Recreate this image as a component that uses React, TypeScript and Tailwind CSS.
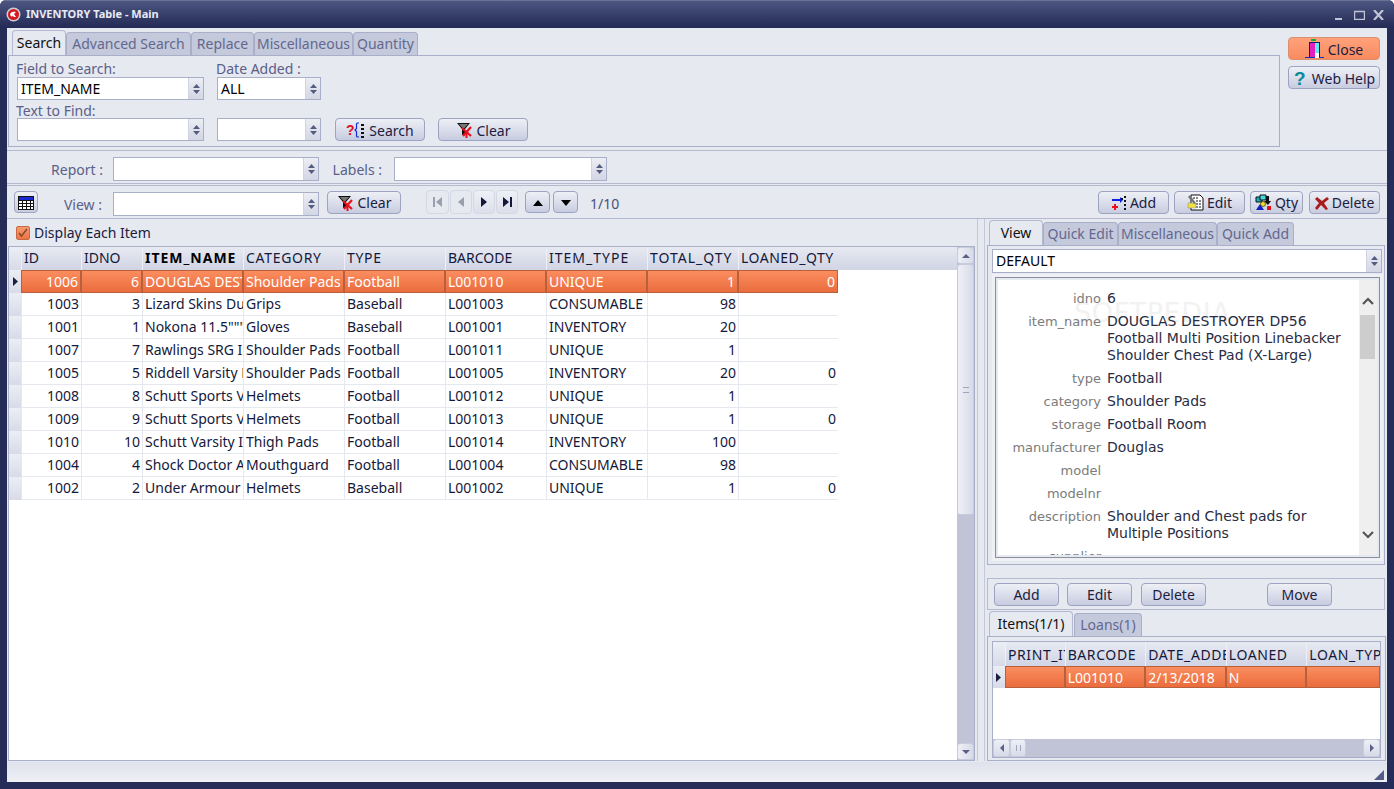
import type { ReactNode } from "react"

const columns = [
  { name: "ID", w: "w-[60px]", t: "", right: true },
  { name: "IDNO", w: "w-[61px]", t: "", right: true },
  { name: "ITEM_NAME", w: "w-[101px]", t: "tracking-[1px]", bold: true },
  { name: "CATEGORY", w: "w-[101px]", t: "tracking-[0.7px]" },
  { name: "TYPE", w: "w-[101px]", t: "tracking-[0.7px]" },
  { name: "BARCODE", w: "w-[101px]", t: "" },
  { name: "ITEM_TYPE", w: "w-[101px]", t: "tracking-[1px]" },
  { name: "TOTAL_QTY", w: "w-[91px]", t: "tracking-[1px]", right: true },
  { name: "LOANED_QTY", w: "w-[100px]", t: "tracking-[0.5px]", right: true },
]

const rows = [
  ["1006", "6", "DOUGLAS DESTROYER", "Shoulder Pads", "Football", "L001010", "UNIQUE", "1", "0"],
  ["1003", "3", "Lizard Skins Dura", "Grips", "Baseball", "L001003", "CONSUMABLE", "98", ""],
  ["1001", "1", 'Nokona 11.5"""', "Gloves", "Baseball", "L001001", "INVENTORY", "20", ""],
  ["1007", "7", "Rawlings SRG Int", "Shoulder Pads", "Football", "L001011", "UNIQUE", "1", ""],
  ["1005", "5", "Riddell Varsity Pad", "Shoulder Pads", "Football", "L001005", "INVENTORY", "20", "0"],
  ["1008", "8", "Schutt Sports Vari", "Helmets", "Football", "L001012", "UNIQUE", "1", ""],
  ["1009", "9", "Schutt Sports Vari", "Helmets", "Football", "L001013", "UNIQUE", "1", "0"],
  ["1010", "10", "Schutt Varsity Ice", "Thigh Pads", "Football", "L001014", "INVENTORY", "100", ""],
  ["1004", "4", "Shock Doctor Adult", "Mouthguard", "Football", "L001004", "CONSUMABLE", "98", ""],
  ["1002", "2", "Under Armour Pro", "Helmets", "Baseball", "L001002", "UNIQUE", "1", "0"],
]

const subColumns = [
  { name: "PRINT_ITEM", value: "", w: "w-[60px]" },
  { name: "BARCODE", value: "L001010", w: "w-[81px]" },
  { name: "DATE_ADDED", value: "2/13/2018", w: "w-[81px]" },
  { name: "LOANED", value: "N", w: "w-[81px]" },
  { name: "LOAN_TYPE", value: "", w: "w-[74px]" },
]

const details: [string, string[]][] = [
  ["idno", ["6"]],
  ["item_name", ["DOUGLAS DESTROYER DP56", "Football Multi Position Linebacker", "Shoulder Chest Pad (X-Large)"]],
  ["type", ["Football"]],
  ["category", ["Shoulder Pads"]],
  ["storage", ["Football Room"]],
  ["manufacturer", ["Douglas"]],
  ["model", [""]],
  ["modelnr", [""]],
  ["description", ["Shoulder and Chest pads for", "Multiple Positions"]],
  ["supplier", [""]],
]

function Combo({ className, value }: { className: string; value?: string }) {
  return (
    <div className={`flex bg-white border border-[#a9afc9] ${className}`}>
      <div className="flex-1 pl-[3px] leading-[21px] text-black overflow-hidden whitespace-nowrap">{value}</div>
      <div className="w-[15px] bg-gradient-to-b from-[#eceef4] to-[#d3d6e4] border-l border-[#d0d3e2] flex flex-col items-center justify-center gap-[2px]">
        <svg width="7" height="4" viewBox="0 0 7 4"><path d="M3.5 0 7 4H0z" fill="#555c82" /></svg>
        <svg width="7" height="4" viewBox="0 0 7 4"><path d="M0 0h7L3.5 4z" fill="#555c82" /></svg>
      </div>
    </div>
  )
}

function Btn({ className, children }: { className: string; children: ReactNode }) {
  return (
    <button className={`flex items-center justify-center gap-[3px] pt-px border border-[#9da3c0] rounded-[4px] bg-gradient-to-b from-[#eef0f6] to-[#c8cce0] text-[#1c2040] ${className}`}>
      {children}
    </button>
  )
}

function Tab({ className, active, children }: { className: string; active?: boolean; children: ReactNode }) {
  return (
    <div
      className={
        active
          ? `flex items-center justify-center pb-[2px] border border-b-0 border-[#b4b9d0] rounded-t-[4px] bg-[#e6e9f0] text-[#1c2040] ${className}`
          : `flex items-center justify-center pb-[2px] border border-b-0 border-[#a9afc9] rounded-t-[4px] bg-[#c5c9dc] text-[#62688e] ${className}`
      }
    >
      {children}
    </div>
  )
}

function FilterClearIcon() {
  return (
    <svg width="18" height="18" viewBox="0 0 18 18">
      <path d="M1 2h13L9 8v5l-3 1V8z" fill="#111" />
      <path d="M3 3h9L8.5 7h-2z" fill="#777" />
      <path d="M6 7l9 8M15 6l-8 9" stroke="#e8101c" strokeWidth="2.2" />
      <path d="M9.5 12h2v5h-2z" fill="#e8101c" />
    </svg>
  )
}

function SearchIcon() {
  return (
    <svg width="20" height="17" viewBox="0 0 20 17">
      <text x="0" y="13" fontSize="14" fontWeight="700" fontFamily="Liberation Sans, sans-serif" fill="#e0101c">?</text>
      <path d="M13 1h-1.500q-1 0-1 1v4.500L9 8l1.500 1.500V14q0 1 1 1H13" fill="none" stroke="#1030e0" strokeWidth="1.200" />
      <path d="M15 2h3v2h-3zM15 6h3v2h-3zM15 10h3v2h-3zM15 14h3v2h-3z" fill="#111" />
    </svg>
  )
}

function CloseIcon() {
  return (
    <svg width="19" height="20" viewBox="0 0 19 20">
      <path d="M6 0h5v2H6z" fill="#10b040" />
      <path d="M4 3h11v15H4z" fill="#111a70" />
      <path d="M5 4h5v14H5z" fill="#e020c0" />
      <path d="M10 4h4v14h-4z" fill="#60e8f0" />
      <path d="M0 18h19v1H0z" fill="#1030c0" />
      <path d="M10 14h4v5h-4z" fill="#fff" />
    </svg>
  )
}

function NavBtn({ dim, children, className }: { dim?: boolean; children: ReactNode; className: string }) {
  return (
    <div className={`flex items-center justify-center border border-[#d4d7e4] rounded-[4px] ${dim ? "bg-[#e6e9f0]" : "bg-gradient-to-b from-[#eef0f6] to-[#dcdfea]"} ${className}`}>
      {children}
    </div>
  )
}

function Indicator({ arrow, className }: { arrow?: boolean; className: string }) {
  return (
    <div className={`flex items-center justify-center bg-gradient-to-b from-[#eceef4] to-[#d8dbe8] ${className}`}>
      {arrow && <svg width="5" height="9" viewBox="0 0 5 9"><path d="M0 0l5 4.5L0 9z" fill="#1c2040" /></svg>}
    </div>
  )
}

export default function App() {
  return (
    <div
      className="w-[1394px] h-[789px] overflow-hidden flex flex-col rounded-t-[6px] bg-[#252c57] text-[14px] text-[#1c2040]"
      style={{ fontFamily: '"Noto Sans", sans-serif' }}
    >
      {/* Title bar */}
      <div className="h-[28px] flex items-center pl-[6px] pr-[10px] bg-gradient-to-b from-[#4d5680] to-[#232a55] border-t border-[#6a7296]">
        <svg width="15" height="15" viewBox="0 0 15 15">
          <circle cx="7.5" cy="7.5" r="7" fill="#d0d0d8" />
          <circle cx="7.5" cy="7.5" r="5.5" fill="#d81820" />
          <path d="M4 8c0-3 3-4 6-3L8 7l2 3H8L6.5 8.5 6 10z" fill="#fff" />
        </svg>
        <span className="ml-[5px] text-[11px] font-bold text-[#e8eaf4]">INVENTORY Table - Main</span>
        <div className="ml-auto flex items-center gap-[8px]">
          <svg className="mr-[3px]" width="8" height="10" viewBox="0 0 8 10"><path d="M0 8h7v2H0z" fill="#c0c4d4" /></svg>
          <svg width="11" height="10" viewBox="0 0 11 10"><path d="M.5 1.500h10v8H.5z" fill="none" stroke="#c0c4d4" strokeWidth="1.400" /></svg>
          <svg width="11" height="10" viewBox="0 0 11 10"><path d="M1 0l9 10M10 0l-9 10" stroke="#c0c4d4" strokeWidth="2.200" /></svg>
        </div>
      </div>

      <div className="mx-[7px] h-[754px] flex flex-col bg-[#e6e9f0]">
        {/* Search tabs and close / help */}
        <div className="h-[122px] flex">
          <div className="w-[1273px] flex flex-col">
            <div className="h-[27px] pl-[5px] flex items-end">
              <Tab active className="w-[54px] h-[25px] text-[#111]">Search</Tab>
              <Tab className="w-[125px] h-[23px]">Advanced Search</Tab>
              <Tab className="w-[63px] h-[23px]">Replace</Tab>
              <Tab className="w-[99px] h-[23px]">Miscellaneous</Tab>
              <Tab className="w-[65px] h-[23px]">Quantity</Tab>
            </div>
            <div className="h-[92px] ml-px border border-[#a9afc9] pl-[8px] text-[#5a6088]">
              <div className="flex h-[21px] items-end leading-[16px]">
                <span className="w-[200px] -ml-px">Field to Search:</span>
                <span>Date Added :</span>
              </div>
              <div className="flex gap-[13px]">
                <Combo className="w-[187px] h-[23px]" value="ITEM_NAME" />
                <Combo className="w-[104px] h-[23px]" value="ALL" />
              </div>
              <div className="h-[18px] leading-[22px] -ml-px">Text to Find:</div>
              <div className="flex">
                <Combo className="w-[187px] h-[23px]" />
                <Combo className="w-[104px] h-[23px] ml-[13px]" />
                <Btn className="w-[90px] h-[23px] ml-[14px]"><SearchIcon />Search</Btn>
                <Btn className="w-[90px] h-[23px] ml-[13px]"><FilterClearIcon />Clear</Btn>
              </div>
            </div>
          </div>
          <div className="pt-[9px] pl-[8px] flex flex-col gap-[6px]">
            <Btn className="w-[92px] h-[23px] border-[#d89070] from-[#ffa27c] to-[#f98a5e] gap-[4px]"><CloseIcon />Close</Btn>
            <Btn className="w-[92px] h-[23px]">
              <svg width="16" height="20" viewBox="0 0 16 20">
                <text x="1" y="17" fontSize="19" fontWeight="700" fontFamily="Liberation Sans, sans-serif" fill="#0a8a9a">?</text>
              </svg>
              Web Help
            </Btn>
          </div>
        </div>

        {/* Report row */}
        <div className="h-[34px] pt-[3px] border-y border-[#b4b9d0] flex items-center text-[#5a6088]">
          <span className="w-[100px] text-right pr-[4px] pl-[2px] pt-px shrink-0">Report :</span>
          <Combo className="w-[206px] h-[24px] ml-[6px]" />
          <span className="w-[75px] text-right pr-[12px] pt-px">Labels :</span>
          <Combo className="w-[213px] h-[24px]" />
        </div>

        {/* View row */}
        <div className="h-[34px] mt-[1px] border-y border-[#b4b9d0] flex items-center text-[#5a6088]">
          <Btn className="w-[24px] h-[22px] ml-[7px]">
            <svg width="16" height="14" viewBox="0 0 16 14">
              <path d="M0 0h16v14H0z" fill="#111" />
              <path d="M1 1h14v3H1z" fill="#1828d0" />
              <path d="M1 5h3v2H1zM5 5h3v2H5zM9 5h3v2H9zM13 5h2v2h-2zM1 8h3v2H1zM5 8h3v2H5zM9 8h3v2H9zM13 8h2v2h-2zM1 11h3v2H1zM5 11h3v2H5zM9 11h3v2H9zM13 11h2v2h-2z" fill="#fff" />
            </svg>
          </Btn>
          <span className="w-[69px] text-right pr-[5px] pt-[5px]">View :</span>
          <Combo className="w-[206px] h-[24px] ml-[6px] mt-[3px]" />
          <Btn className="w-[74px] h-[23px] ml-[8px] text-[#1c2040]"><FilterClearIcon />Clear</Btn>
          <div className="flex ml-[25px] gap-px">
            <NavBtn dim className="w-[23px] h-[24px]"><svg width="9" height="10" viewBox="0 0 9 10"><path d="M0 0h2v10H0zM9 0v10L3 5z" fill="#9a9ead" /></svg></NavBtn>
            <NavBtn dim className="w-[22px] h-[24px]"><svg width="6" height="10" viewBox="0 0 6 10"><path d="M6 0v10L0 5z" fill="#9a9ead" /></svg></NavBtn>
            <NavBtn className="w-[22px] h-[24px]"><svg width="6" height="10" viewBox="0 0 6 10"><path d="M0 0v10l6-5z" fill="#14183a" /></svg></NavBtn>
            <NavBtn className="w-[22px] h-[24px]"><svg width="9" height="10" viewBox="0 0 9 10"><path d="M0 0v10l6-5zM7 0h2v10H7z" fill="#14183a" /></svg></NavBtn>
          </div>
          <Btn className="w-[25px] h-[22px] ml-[7px]"><svg width="10" height="6" viewBox="0 0 10 6"><path d="M5 0l5 6H0z" fill="#000" /></svg></Btn>
          <Btn className="w-[25px] h-[22px] ml-[3px]"><svg width="10" height="6" viewBox="0 0 10 6"><path d="M0 0h10L5 6z" fill="#000" /></svg></Btn>
          <span className="ml-[12px] pt-[3px] text-[#4a5078]">1/10</span>
          <div className="ml-auto flex mr-[7px] text-[#1c2040]">
            <Btn className="w-[71px] h-[23px]">
              <svg width="16" height="16" viewBox="0 0 16 16">
                <path d="M1 4h8V2l3 3-3 3V6H1z" fill="#1020e0" />
                <path d="M3 9h2v2h2v2H5v2H3v-2H1v-2h2z" fill="#e8101c" />
                <path d="M10 3h2v2h-2zM13 1h2v2h-2zM13 5h2v2h-2zM13 9h2v2h-2zM13 13h2v2h-2z" fill="#111" />
              </svg>
              Add
            </Btn>
            <Btn className="w-[71px] h-[23px] ml-[5px]">
              <svg width="17" height="17" viewBox="0 0 17 17">
                <path d="M4 1h9l3 3v12H4z" fill="#fff" stroke="#111" />
                <path d="M6 4h6M9 7h5M9 10h5M6 13h8" stroke="#111" strokeDasharray="2 1" />
                <path d="M1 9h8v5H1z" fill="#f0e040" stroke="#888" strokeWidth=".5" />
                <path d="M3 1l6 8-2 1-6-7z" fill="#777" />
              </svg>
              Edit
            </Btn>
            <Btn className="w-[53px] h-[23px] ml-[5px]">
              <svg width="17" height="17" viewBox="0 0 17 17">
                <path d="M1 3h6v5H1z" fill="#18b0c0" stroke="#111" />
                <path d="M5 1h6v5H5z" fill="#48d8e0" stroke="#111" />
                <path d="M11 2h3v5h2l-3 4-4-4h2z" fill="#111" />
                <path d="M1 16l4-6 4 6z" fill="#1020c0" />
                <circle cx="8" cy="10" r="2.500" fill="#f0e020" stroke="#111" strokeWidth=".6" />
                <path d="M12 12h4v4h-4z" fill="#e0101c" />
              </svg>
              Qty
            </Btn>
            <Btn className="w-[71px] h-[23px] ml-[6px]">
              <svg width="14" height="14" viewBox="0 0 14 14"><path d="M2 1l5 4 5-4 2 2-5 4 4 6-2 1-5-5-4 5-2-2 4-5-4-4z" fill="#a81c1c" /></svg>
              Delete
            </Btn>
          </div>
        </div>

        {/* Main area */}
        <div className="flex-1 flex min-h-0">
          {/* Left side: item grid */}
          <div className="w-[968px] flex flex-col">
            <div className="h-[27px] flex items-center pl-[9px] text-[#1c2040]">
              <div className="w-[14px] h-[14px] rounded-[2px] border border-[#c86a40] bg-gradient-to-b from-[#f99a70] to-[#ec7444] flex items-center justify-center">
                <svg width="10" height="9" viewBox="0 0 10 9"><path d="M1 5l2.500 3L9 1" fill="none" stroke="#8a4a2a" strokeWidth="1.600" /></svg>
              </div>
              <span className="ml-[4px]">Display Each Item</span>
            </div>
            <div className="flex-1 ml-px border border-[#a9afc9] flex bg-white min-h-0">
              <div className="w-[949px]">
                <div className="flex h-[23px] bg-gradient-to-b from-[#e8eaf2] to-[#d0d4e4]">
                  <Indicator className="w-[12px]" />
                  {columns.map((c) => (
                    <div key={c.name} className={`${c.w} ${c.t} pl-[2px] border-l border-[#eef0f5] leading-[22px] overflow-hidden whitespace-nowrap ${c.bold ? "font-bold text-black" : "text-[#14183a]"}`}>
                      {c.name}
                    </div>
                  ))}
                </div>
                {rows.map((r, i) => (
                  <div key={r[0]} className="flex h-[23px]">
                    <Indicator arrow={i === 0} className="w-[12px]" />
                    {columns.map((c, j) => (
                      <div
                        key={c.name}
                        className={`${c.w} px-[2px] leading-[22px] overflow-hidden whitespace-nowrap ${c.right ? "text-right" : ""} ${
                          i === 0
                            ? "bg-gradient-to-b from-[#fb8d5f] to-[#ea6c3c] border border-[#b8603c] text-white"
                            : "border-l border-b border-[#e6e8ef] text-[#14183a]"
                        }`}
                      >
                        {r[j]}
                      </div>
                    ))}
                  </div>
                ))}
              </div>
              <div className="w-[17px] bg-[#c0c4d6] flex flex-col justify-between">
                <div className="flex flex-col">
                  <div className="h-[17px] bg-gradient-to-r from-[#eef0f6] to-[#d8dbe8] border border-[#c8cbdc] rounded-[3px] flex items-center justify-center">
                    <svg width="8" height="4" viewBox="0 0 8 4"><path d="M4 0l4 4H0z" fill="#5a6088" /></svg>
                  </div>
                  <div className="h-[251px] bg-gradient-to-r from-[#eef0f6] to-[#d8dbe8] border border-[#c8cbdc] rounded-[3px] flex items-center justify-center">
                    <div className="w-[6px] h-[6px] border-y border-[#a0a4bc]" />
                  </div>
                </div>
                <div className="h-[17px] bg-gradient-to-r from-[#eef0f6] to-[#d8dbe8] border border-[#c8cbdc] rounded-[3px] flex items-center justify-center">
                  <svg width="8" height="4" viewBox="0 0 8 4"><path d="M0 0h8L4 4z" fill="#5a6088" /></svg>
                </div>
              </div>
            </div>
          </div>

          {/* Splitter */}
          <div className="w-[12px] flex justify-center">
            <div className="w-[8px] border-x border-[#c4c8da]" />
          </div>

          {/* Right side: detail and sub grid */}
          <div className="w-[399px] flex flex-col">
            <div className="h-[26px] pl-[2px] flex items-end">
              <Tab active className="w-[54px] h-[25px] text-[#111]">View</Tab>
              <Tab className="w-[75px] h-[23px]">Quick Edit</Tab>
              <Tab className="w-[99px] h-[23px]">Miscellaneous</Tab>
              <Tab className="w-[77px] h-[23px]">Quick Add</Tab>
            </div>
            <div className="h-[320px] border border-[#a9afc9] px-[4px] pt-[3px] mr-[1px]">
              <Combo className="w-[390px] h-[24px]" value="DEFAULT" />
              <div className="relative mt-[1px] w-[391px] h-[287px] border-[3px] border-[#eef0f5] outline outline-1 -outline-offset-4 outline-[#8a8f9c] p-[3px]">
                <div className="relative h-full flex bg-white overflow-hidden leading-[17px]" style={{ fontFamily: '"DejaVu Sans", sans-serif' }}>
                  {/* faint watermark under the text */}
                  <div className="absolute top-[24px] left-[76px] text-[27px] tracking-wide text-[#f2f2f2]">SOFTPEDIA</div>
                  <div className="relative flex-1 pt-[7px]">
                    {details.map(([label, lines]) => (
                      <div key={label} className="flex py-[3px]">
                        <div className="w-[103px] text-right text-[13px] text-[#7c7c7c] shrink-0">{label}</div>
                        <div className="ml-[6px] text-[14px] text-[#2a2d44]">
                          {lines.map((l, i) => (
                            <div key={i} className="min-h-[17px] whitespace-nowrap">{l}</div>
                          ))}
                        </div>
                      </div>
                    ))}
                  </div>
                  <div className="relative w-[18px] bg-[#efefef] flex flex-col items-center pt-[17px] pb-[16px] justify-between">
                    <svg width="12" height="8" viewBox="0 0 12 8"><path d="M1 7l5-5 5 5" fill="none" stroke="#555" strokeWidth="2.200" /></svg>
                    <svg width="12" height="8" viewBox="0 0 12 8"><path d="M1 1l5 5 5-5" fill="none" stroke="#555" strokeWidth="2.200" /></svg>
                  </div>
                </div>
                {/* scrollbar thumb */}
                <div className="absolute top-[38px] right-[5px] w-[15px] h-[44px] bg-[#cdcdcd]" />
              </div>
            </div>
            <div className="h-[32px] mt-[13px] mr-[1px] border border-[#b4b9d0] flex items-center pl-[6px] text-[#1c2040]">
              <Btn className="w-[65px] h-[23px]">Add</Btn>
              <Btn className="w-[65px] h-[23px] ml-[8px]">Edit</Btn>
              <Btn className="w-[65px] h-[23px] ml-[9px]">Delete</Btn>
              <Btn className="w-[65px] h-[23px] ml-[61px]">Move</Btn>
            </div>
            <div className="h-[26px] pl-[2px] flex items-end">
              <Tab active className="w-[84px] h-[25px] text-[#111]">Items(1/1)</Tab>
              <Tab className="w-[68px] h-[23px] ml-[1px]">Loans(1)</Tab>
            </div>
            <div className="flex-1 border border-[#a9afc9] p-[4px] pb-[2px] min-h-0">
              <div className="h-full border border-[#a9afc9] bg-white flex flex-col overflow-hidden">
                <div className="flex h-[24px] bg-gradient-to-b from-[#e8eaf2] to-[#d0d4e4]">
                  <Indicator className="w-[12px]" />
                  {subColumns.map((c) => (
                    <div key={c.name} className={`${c.w} pl-[2px] tracking-[0.6px] leading-[26px] border-l border-[#eef0f5] overflow-hidden whitespace-nowrap text-[#14183a]`}>{c.name}</div>
                  ))}
                </div>
                <div className="flex h-[22px]">
                  <Indicator arrow className="w-[12px]" />
                  {subColumns.map((c) => (
                    <div key={c.name} className={`${c.w} px-[2px] leading-[22px] border border-[#b8603c] bg-gradient-to-b from-[#fb8d5f] to-[#ea6c3c] text-white whitespace-nowrap`}>{c.value}</div>
                  ))}
                </div>
                <div className="flex-1" />
                <div className="h-[18px] bg-[#c0c4d6] flex justify-between">
                  <div className="flex">
                    <div className="w-[17px] bg-gradient-to-b from-[#eef0f6] to-[#d8dbe8] border border-[#c8cbdc] rounded-[3px] flex items-center justify-center">
                      <svg width="4" height="8" viewBox="0 0 4 8"><path d="M4 0v8L0 4z" fill="#5a6088" /></svg>
                    </div>
                    <div className="w-[16px] bg-gradient-to-b from-[#eef0f6] to-[#d8dbe8] border border-[#c8cbdc] rounded-[3px] flex items-center justify-center">
                      <div className="w-[5px] h-[6px] border-x border-[#a0a4bc]" />
                    </div>
                  </div>
                  <div className="w-[17px] bg-gradient-to-b from-[#eef0f6] to-[#d8dbe8] border border-[#c8cbdc] rounded-[3px] flex items-center justify-center">
                    <svg width="4" height="8" viewBox="0 0 4 8"><path d="M0 0v8l4-4z" fill="#5a6088" /></svg>
                  </div>
                </div>
              </div>
            </div>
          </div>
        </div>

        {/* Status bar */}
        <div className="h-[20px] mt-[1px] bg-gradient-to-b from-[#dfe2ec] to-[#eef0f5] flex items-end justify-end pr-[3px] pb-[2px]">
          <svg width="10" height="10" viewBox="0 0 10 10"><path d="M10 0v10H0z" fill="#555c88" /></svg>
        </div>
      </div>
    </div>
  )
}
